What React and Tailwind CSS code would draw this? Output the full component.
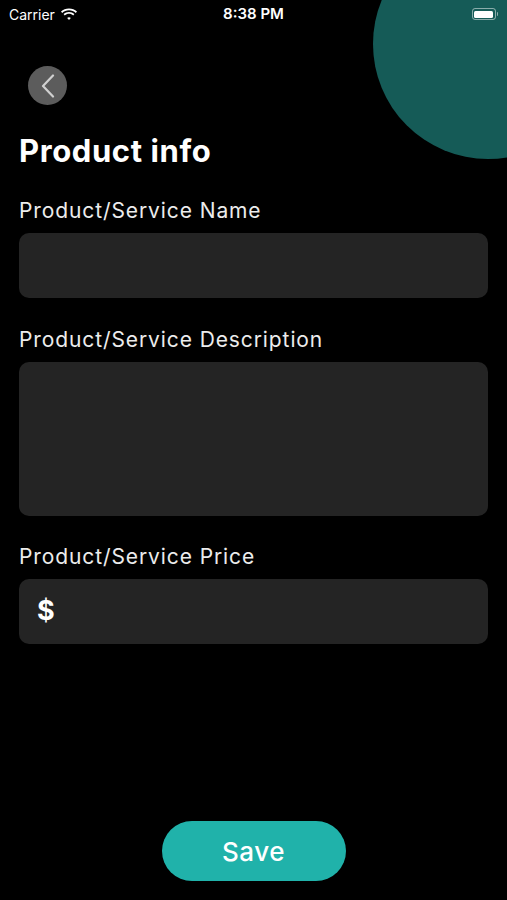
import React from 'react';

const font = { fontFamily: '"Inter", "Noto Sans", sans-serif' };

const StatusBar = () => (
  <div className="relative z-10 flex h-[28px] items-center justify-between px-[9px] text-white">
    <div className="flex items-center gap-[5px] text-[14px]">
      <span>Carrier</span>
      <svg width="18" height="13" viewBox="0 0 18 13" fill="white">
        <path d="M9 2.2c2.6 0 5 1 6.8 2.7l1.2-1.3C14.9 1.6 12.1.4 9 .4S3.1 1.6 1 3.6l1.2 1.3C4 3.2 6.4 2.2 9 2.2z" />
        <path d="M9 5.8c1.6 0 3.1.6 4.2 1.6l1.2-1.3C13 4.8 11.1 4 9 4S5 4.8 3.6 6.1l1.2 1.3C5.9 6.4 7.4 5.8 9 5.8z" />
        <path d="M9 9.3c.7 0 1.3.3 1.8.7L9 12 7.2 10c.5-.4 1.1-.7 1.8-.7z" />
      </svg>
    </div>
    <span className="absolute left-1/2 -translate-x-1/2 text-[15px] font-semibold">8:38 PM</span>
    <div className="flex items-center">
      <div className="h-[12px] w-[24px] rounded-[3px] border border-white/50 p-[1.5px]">
        <div className="h-full w-full rounded-[1.5px] bg-white" />
      </div>
      <div className="ml-[1px] h-[4px] w-[1.5px] rounded-r bg-white/50" />
    </div>
  </div>
);

const Label = ({ children }) => (
  <div className="text-[21px] leading-[28px] tracking-[0.9px] text-[#ececec]">{children}</div>
);

export default function App() {
  return (
    <div className="relative h-[900px] w-[507px] overflow-hidden bg-black" style={font}>
      {/* decorative circle */}
      <div className="absolute left-[373px] top-[-71px] h-[230px] w-[230px] rounded-full bg-[#155b57]" />

      <StatusBar />

      <div className="relative z-10 flex flex-col px-[19px]">
        <button className="ml-[9px] mt-[38px] flex h-[39px] w-[39px] items-center justify-center rounded-full bg-[#5c5c5c]">
          <svg width="14" height="24" viewBox="0 0 14 24" fill="none">
            <path d="M12 1.5 L2 12 L12 22.5" stroke="#d0d0d0" strokeWidth="2.2" strokeLinecap="round" strokeLinejoin="round" />
          </svg>
        </button>

        <h1 className="mt-[26px] text-[31px] font-bold leading-[40px] tracking-[0.6px] text-white">Product info</h1>

        <div className="mt-[26px]">
          <Label>Product/Service Name</Label>
          <div className="mt-[8px] h-[65px] rounded-[10px] bg-[#242424]" />
        </div>

        <div className="mt-[28px]">
          <Label>Product/Service Description</Label>
          <div className="mt-[8px] h-[154px] rounded-[10px] bg-[#242424]" />
        </div>

        <div className="mt-[27px]">
          <Label>Product/Service Price</Label>
          <div className="mt-[8px] flex h-[65px] items-center rounded-[10px] bg-[#242424] px-[18px]">
            <span className="text-[27px] font-bold text-white">$</span>
          </div>
        </div>
      </div>

      <div className="absolute bottom-[19px] left-0 right-0 flex justify-center">
        <button className="flex h-[60px] w-[184px] items-center justify-center rounded-full bg-[#20b2aa] text-[26px] font-medium tracking-[0.5px] text-white">
          Save
        </button>
      </div>
    </div>
  );
}
